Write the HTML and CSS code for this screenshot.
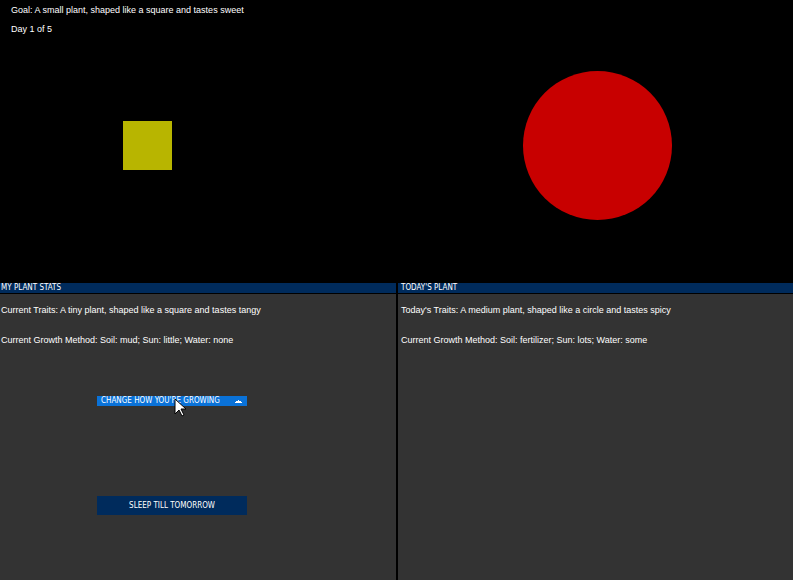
FILE: index.html
```html
<!DOCTYPE html>
<html>
<head>
<meta charset="utf-8">
<link rel="stylesheet" href="styles.css">
</head>
<body>
<div class="stage">
  <div class="info">
    <div class="line">Goal: A small plant, shaped like a square and tastes sweet</div>
    <div class="line day">Day 1 of 5</div>
  </div>
  <div class="plant square"></div>
  <div class="plant circle"></div>
</div>
<div class="panels">
  <section class="panel left">
    <div class="head">MY PLANT STATS</div>
    <div class="body">
      <p class="txt">Current Traits: A tiny plant, shaped like a square and tastes tangy</p>
      <p class="txt">Current Growth Method: Soil: mud; Sun: little; Water: none</p>
      <div class="actions">
        <div class="select">
          <span>CHANGE HOW YOU'RE GROWING</span>
          <svg class="caret" width="7" height="3" viewBox="0 0 7 3"><path d="M3 0h1v1h2v1h1v1H0V2h1V1h2z" fill="#fff"/></svg>
          <svg class="cursor" width="13" height="19" viewBox="0 0 13 19"><path d="M1 1v15l4-4 3 6 2-1-3-6h5z" fill="#fff" stroke="#000" stroke-width="1"/></svg>
        </div>
        <div class="sleep">SLEEP TILL TOMORROW</div>
      </div>
    </div>
  </section>
  <section class="panel right">
    <div class="head">TODAY'S PLANT</div>
    <div class="body">
      <p class="txt">Today's Traits: A medium plant, shaped like a circle and tastes spicy</p>
      <p class="txt">Current Growth Method: Soil: fertilizer; Sun: lots; Water: some</p>
    </div>
  </section>
</div>
</body>
</html>
```
FILE: styles.css
```css
* { box-sizing: border-box; }
html, body { margin: 0; padding: 0; }
body {
  width: 793px;
  height: 580px;
  overflow: hidden;
  background: #000;
  color: #fff;
  font-family: "Liberation Sans", Arial, sans-serif;
  font-size: 9px;
}
.stage {
  position: relative;
  height: 283px;
}
.info { padding: 4px 0 0 11px; }
.line { height: 12px; line-height: 12px; }
.day { margin-top: 7px; }
.plant { position: absolute; }
.square {
  left: 123px; top: 121px;
  width: 49px; height: 49px;
  background: #b8b500;
}
.circle {
  left: 523px; top: 71px;
  width: 149px; height: 149px;
  border-radius: 50%;
  background: #c80000;
}
.panels {
  display: flex;
  gap: 2px;
  height: 297px;
}
.panel {
  background: #333333;
  display: flex;
  flex-direction: column;
}
.left { width: 396px; }
.right { flex: 1; }
.head, .select, .sleep {
  font-family: "DejaVu Sans Condensed", "Liberation Sans", sans-serif;
  font-size: 8px;
}
.head {
  background: #002b5c;
  height: 10px;
  line-height: 10px;
  padding-left: 1px;
  border-bottom: 1px solid #000;
  box-sizing: content-box;
}
.right .head { padding-left: 3px; }
.body { padding: 0 0 0 1px; flex: 1; }
.right .body { padding-left: 3px; }
.txt { margin: 10px 0 0; height: 12px; line-height: 12px; }
.txt + .txt { margin-top: 18px; }
.actions {
  display: flex;
  flex-direction: column;
  padding-left: 96px;
  margin-top: 50px;
  gap: 90px;
}
.select {
  position: relative;
  width: 150px; height: 10px;
  background: #0a72d8;
  line-height: 10px;
  padding-left: 4px;
  display: flex;
  align-items: center;
  justify-content: space-between;
  padding-right: 5px;
}
.caret { display: block; }
.cursor { position: absolute; left: 77px; top: 2px; }
.sleep {
  width: 150px; height: 19px;
  background: #002b5c;
  line-height: 19px;
  text-align: center;
}
```
